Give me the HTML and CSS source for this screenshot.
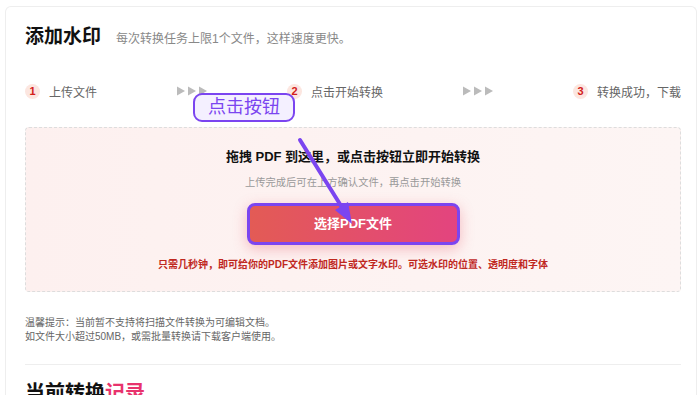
FILE: index.html
```html
<!doctype html>
<html lang="zh-CN">

    <head>
        <meta charset="UTF-8" />
        <title>添加水印</title>
        <link rel="stylesheet" href="styles.css">
    </head>

    <body>
        <div class="card">
            <div class="head">
                <h1>添加水印</h1>
                <span class="tip">每次转换任务上限1个文件，这样速度更快。</span>
            </div>
            <div class="steps">
                <div class="step"><i>1</i><span>上传文件</span></div>
                <svg class="arrows" width="30" height="10" viewBox="0 0 30 10">
                    <polygon points="0,0.5 8,5 0,9.5" />
                    <polygon points="11,0.5 19,5 11,9.5" />
                    <polygon points="22,0.5 30,5 22,9.5" />
                </svg>
                <div class="step"><i>2</i><span>点击开始转换</span></div>
                <svg class="arrows" width="30" height="10" viewBox="0 0 30 10">
                    <polygon points="0,0.5 8,5 0,9.5" />
                    <polygon points="11,0.5 19,5 11,9.5" />
                    <polygon points="22,0.5 30,5 22,9.5" />
                </svg>
                <div class="step"><i>3</i><span>转换成功，下载</span></div>
            </div>
            <div class="drop">
                <div class="drop_title">拖拽 PDF 到这里，或点击按钮立即开始转换</div>
                <div class="drop_sub">上传完成后可在上方确认文件，再点击开始转换</div>
                <a href="#" class="btn">选择PDF文件</a>
                <div class="drop_note">只需几秒钟，即可给你的PDF文件添加图片或文字水印。可选水印的位置、透明度和字体</div>
            </div>
            <div class="notes">
                <p>温馨提示：当前暂不支持将扫描文件转换为可编辑文档。</p>
                <p>如文件大小超过50MB，或需批量转换请下载客户端使用。</p>
            </div>
            <div class="line"></div>
            <h2>当前转换<em>记录</em></h2>
        </div>

        <!-- 标注 -->
        <div class="label">点击按钮</div>
        <svg class="pointer" width="700" height="395" viewBox="0 0 700 395">
            <line x1="300" y1="140" x2="343" y2="209" stroke="#7b45f0" stroke-width="4" stroke-linecap="round" />
            <polygon points="352,224 335,210 348,202" fill="#7b45f0" />
        </svg>
    </body>

</html>
```

FILE: styles.css
```css
* {
    padding: 0px;
    margin: 0px;
    box-sizing: border-box;
}

html,
body {
    font-family: "Liberation Sans", "Noto Sans CJK SC", sans-serif;
    font-size: 12px;
    width: 100%;
    height: 100%;
    background: #ffffff;
    overflow: hidden;
}

body {
    padding: 6px 3px 0px 5px;
}

.card {
    border: 1px solid #eeeeee;
    border-bottom: none;
    border-radius: 6px 6px 0px 0px;
    padding: 16px 15px 0px 19px;
    height: 400px;
}

.head {
    display: flex;
    align-items: center;
    height: 28px;
}

.head h1 {
    font-size: 19px;
    font-weight: bold;
    color: #111111;
    line-height: 28px;
}

.head .tip {
    margin-left: 15px;
    font-size: 12px;
    color: #888888;
}

.steps {
    margin-top: 30px;
    height: 20px;
    display: flex;
    align-items: center;
    justify-content: space-between;
}

.step {
    display: flex;
    align-items: center;
    white-space: nowrap;
}

.step i {
    width: 15px;
    height: 15px;
    border-radius: 50%;
    background: #fce6e0;
    color: #d3201a;
    font-style: normal;
    font-weight: bold;
    font-size: 11px;
    line-height: 15px;
    text-align: center;
}

.step span {
    margin-left: 9px;
    color: #666666;
    font-size: 12px;
}

.arrows {
    fill: #bbbbbb;
}

.drop {
    margin-top: 26px;
    height: 165px;
    border: 1px dashed #dddddd;
    border-radius: 4px;
    background: linear-gradient(90deg, #fdf0ef, #fdf5f4);
    padding-top: 19px;
    display: flex;
    flex-direction: column;
    align-items: center;
}

.drop_title {
    font-size: 13px;
    font-weight: bold;
    color: #111111;
    line-height: 20px;
}

.drop_sub {
    margin-top: 8px;
    font-size: 10.3px;
    color: #999999;
    line-height: 16px;
}

.btn {
    display: block;
    margin-top: 12px;
    width: 213px;
    height: 42px;
    line-height: 36px;
    border: 3px solid #7b45f0;
    border-radius: 8px;
    background: linear-gradient(90deg, #e35b55, #e3447f);
    box-shadow: 0px 4px 14px rgba(230, 80, 100, 0.35);
    color: #ffffff;
    font-size: 13px;
    font-weight: bold;
    text-align: center;
    text-decoration: none;
}

.drop_note {
    margin-top: 13px;
    font-size: 10px;
    font-weight: bold;
    color: #c0281f;
    line-height: 14px;
    white-space: nowrap;
}

.notes {
    margin-top: 24px;
    color: #666666;
    font-size: 10px;
    line-height: 14px;
}

.line {
    margin-top: 20px;
    height: 1px;
    background: #eeeeee;
}

h2 {
    margin-top: 14px;
    font-size: 20px;
    font-weight: bold;
    color: #111111;
    line-height: 28px;
}

h2 em {
    font-style: normal;
    color: #e8336d;
}

.label {
    position: absolute;
    left: 193px;
    top: 93px;
    width: 102px;
    height: 29px;
    border: 2px solid #7b45f0;
    border-radius: 9px;
    background: #f4f0ff;
    color: #7b45f0;
    font-size: 18px;
    line-height: 25px;
    text-align: center;
}

.pointer {
    position: absolute;
    left: 0px;
    top: 0px;
}
```
